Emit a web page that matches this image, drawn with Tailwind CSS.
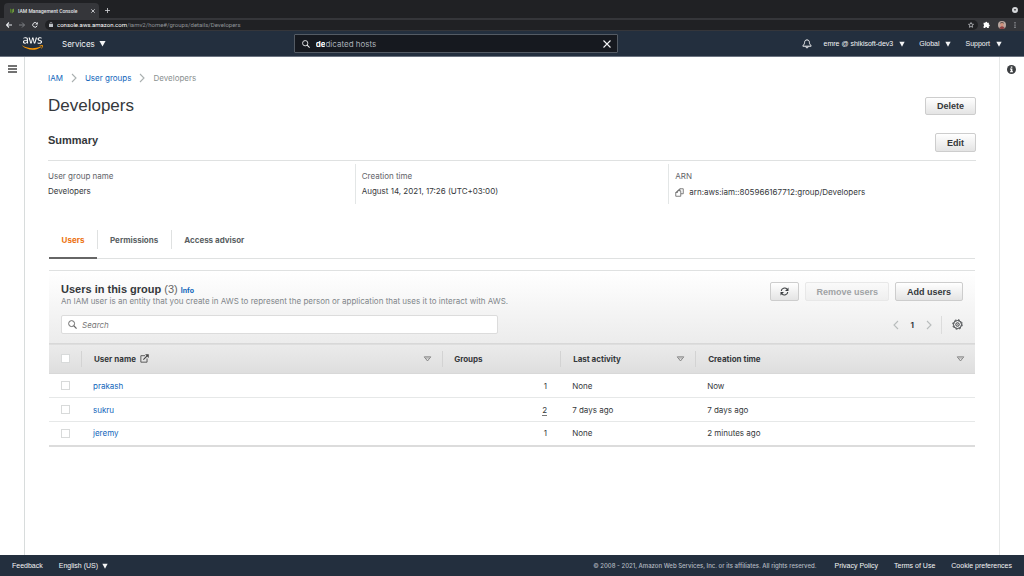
<!DOCTYPE html>
<html lang="en">
<head>
<meta charset="utf-8">
<title>IAM Management Console</title>
<script src="https://cdn.jsdelivr.net/npm/@tailwindcss/browser@4"></script>
</head>
<body class="flex min-h-screen flex-col bg-white font-[Inter,'Liberation_Sans',sans-serif] text-[8px] leading-3 text-[#35383b]">
<svg class="hidden" aria-hidden="true">
  <symbol id="caret" viewBox="0 0 8 8"><path d="M0.5 1h7L4 7.5z" fill="currentColor"/></symbol>
  <symbol id="sort" viewBox="0 0 10 7"><path d="M1.2 1h7.6L5 5.8z" fill="none" stroke="currentColor" stroke-width="1"/><path d="M3.3 2.4h3.4" stroke="currentColor" stroke-width=".6"/></symbol>
  <symbol id="glass" viewBox="0 0 10 10"><circle cx="4" cy="4" r="3.300" fill="none" stroke="currentColor" stroke-width="1.1"/><path d="M6.4 6.4L9.500 9.500" stroke="currentColor" stroke-width="1.3"/></symbol>
  <symbol id="chev" viewBox="0 0 6 10"><path d="M1 1l4 4-4 4" fill="none" stroke="currentColor" stroke-width="1.1"/></symbol>
</svg>

<!-- Browser tab strip -->
<div class="flex h-[18px] items-end bg-[#202124] pl-1">
  <div class="flex h-[15px] w-[95px] items-center rounded-t bg-[#35363a] pr-1 pl-[5px] text-[5px] text-[#e3e5e8]">
    <svg class="mr-[3px] size-[6px]" viewBox="0 0 6 6"><path d="M1 0.5l1.6 1v4L1 4.2z" fill="#4f7a2c"/><path d="M5 0.5l-1.8 1v4L5 3.5z" fill="#6f9a3a"/></svg>
    <span class="flex-1 font-[Roboto,sans-serif] font-medium whitespace-nowrap">IAM Management Console</span>
    <button aria-label="Close tab"><svg class="size-[4px]" viewBox="0 0 4 4"><path d="M.3.3l3.4 3.4M3.7.3L.3 3.7" stroke="#e3e5e8" stroke-width=".8"/></svg></button>
  </div>
  <button class="mb-[5px] ml-[6px]" aria-label="New tab"><svg class="size-[5px]" viewBox="0 0 5 5"><path d="M2.5 0v5M0 2.5h5" stroke="#d5d7da" stroke-width=".8"/></svg></button>
  <svg class="mr-[6px] mb-[5px] ml-auto size-[6px]" viewBox="0 0 6 6"><circle cx="3" cy="3" r="3" fill="#d5d7da"/><path d="M1.8 2.3h2.4L3 4z" fill="#202124"/></svg>
</div>

<!-- Browser toolbar -->
<div class="flex h-[13px] items-center bg-[#35363a] px-[6px] text-[#e8eaed]">
  <button aria-label="Back"><svg class="size-[6px]" viewBox="0 0 6 6"><path d="M6 3H.6M3 .5L.5 3 3 5.5" fill="none" stroke="currentColor" stroke-width="1.100"/></svg></button>
  <button class="ml-[7px] text-[#7e8084]" aria-label="Forward"><svg class="size-[6px]" viewBox="0 0 6 6"><path d="M0 3h5.4M3 .5L5.5 3 3 5.5" fill="none" stroke="currentColor" stroke-width="1"/></svg></button>
  <button class="ml-[7px]" aria-label="Reload"><svg class="size-[6px]" viewBox="0 0 6 6"><path d="M4.9 1.5A2.3 2.3 0 1 0 5.2 3.7" fill="none" stroke="currentColor" stroke-width="1"/><path d="M5.8 0v2.6H3.2z" fill="currentColor"/></svg></button>
  <label class="ml-[7px] flex h-[10px] flex-1 items-center rounded-full bg-[#202124] pr-1 pl-[4px] font-[Roboto,sans-serif] text-[6px] leading-[10px]">
    <svg class="mr-[4px] h-[5px] w-[4px]" viewBox="0 0 4 5"><path d="M0 2h4v3H0z" fill="#bdc1c6"/><path d="M1 2V1.3a1 1 0 0 1 2 0V2" fill="none" stroke="#bdc1c6" stroke-width=".6"/></svg>
    <input class="field-sizing-content bg-transparent text-white outline-none" aria-label="Address" value="console.aws.amazon.com"><span class="text-[#8f9398]">/iamv2/home#/groups/details/Developers</span>
    <svg class="ml-auto size-[6px]" viewBox="0 0 12 12"><path d="M6 1l1.5 3.3 3.5.4-2.6 2.4.7 3.5L6 8.8l-3.1 1.8.7-3.5L1 4.7l3.5-.4z" fill="none" stroke="#dfe1e5" stroke-width="1.3"/></svg>
  </label>
  <svg class="ml-[5px] size-[7px]" viewBox="0 0 12 12"><path d="M1 3h3a1.6 1.6 0 1 1 3.2 0H10v3a1.6 1.6 0 1 1 0 3.2V12H7a1.6 1.6 0 0 0-3.2 0H1V8.8A1.6 1.6 0 0 0 1 6z" fill="#fff"/></svg>
  <svg class="ml-[8px] size-[8px]" viewBox="0 0 8 8"><circle cx="4" cy="4" r="4" fill="#b9a7a0"/><path d="M2 2.6C2 .8 6 .8 6 2.6z" fill="#4a3934"/><circle cx="4" cy="3.7" r="1.8" fill="#d0917c"/><path d="M1.3 7a3 3 0 0 1 5.4 0A4 4 0 0 1 1.3 7z" fill="#8f3f40"/></svg>
  <svg class="mr-[2px] ml-[8px] h-[6px] w-[2px]" viewBox="0 0 2 6"><circle cx="1" cy=".8" r=".6" fill="#dfe1e5"/><circle cx="1" cy="3" r=".6" fill="#dfe1e5"/><circle cx="1" cy="5.2" r=".6" fill="#dfe1e5"/></svg>
</div>

<!-- AWS navigation -->
<header class="flex h-[26px] items-center border-b border-[#6b7380] bg-[#232f3e] px-[22px] font-['Liberation_Sans',sans-serif] text-[7px] text-[#f4f5f6]">
  <a href="#" aria-label="AWS home"><svg class="h-[13px] w-[21px]" viewBox="0 0 304 182"><path fill="#fff" d="M86.4 66.4c0 3.7.4 6.7 1.1 8.9.8 2.2 1.8 4.6 3.2 7.2.5.8.7 1.6.7 2.3 0 1-.6 2-1.9 3l-6.3 4.2c-.9.6-1.8.9-2.6.9-1 0-2-.5-3-1.4-1.4-1.500-2.600-3.100-3.600-4.700-1-1.700-2-3.600-3.100-5.900-7.800 9.200-17.600 13.800-29.400 13.800-8.400 0-15.100-2.400-20-7.200-4.900-4.800-7.400-11.200-7.400-19.200 0-8.500 3-15.400 9.100-20.600 6.100-5.200 14.200-7.800 24.500-7.800 3.400 0 6.900.3 10.600.8 3.700.5 7.500 1.300 11.500 2.200v-7.300c0-7.600-1.600-12.900-4.700-16-3.200-3.100-8.600-4.600-16.300-4.600-3.500 0-7.100.4-10.800 1.300-3.700.9-7.300 2-10.800 3.400-1.600.7-2.800 1.100-3.500 1.300-.7.200-1.200.3-1.600.3-1.400 0-2.100-1-2.100-3.100v-4.900c0-1.600.2-2.800.7-3.500.5-.7 1.400-1.400 2.800-2.100 3.500-1.800 7.700-3.300 12.600-4.500C41 1.900 46.200 1.300 51.700 1.300c11.900 0 20.600 2.700 26.200 8.100 5.500 5.400 8.300 13.600 8.300 24.600v32.400zM45.800 81.600c3.300 0 6.700-.6 10.300-1.800 3.600-1.200 6.800-3.400 9.500-6.400 1.600-1.900 2.800-4 3.400-6.400.6-2.400 1-5.300 1-8.700v-4.200c-2.900-.7-6-1.300-9.200-1.700-3.200-.4-6.300-.6-9.400-.6-6.700 0-11.600 1.300-14.900 4-3.300 2.700-4.900 6.500-4.900 11.500 0 4.700 1.200 8.200 3.700 10.600 2.400 2.500 5.900 3.700 10.500 3.700zM126.100 92.400c-1.800 0-3-.3-3.800-1-.8-.6-1.500-2-2.100-3.900L96.700 10.200c-.6-2-.9-3.300-.9-4 0-1.600.8-2.500 2.400-2.500h9.800c1.900 0 3.200.3 3.900 1 .8.6 1.400 2 2 3.900l16.800 66.200 15.600-66.200c.5-2 1.100-3.300 1.900-3.900.8-.6 2.200-1 4-1h8c1.900 0 3.200.3 4 1 .8.6 1.500 2 1.900 3.900l15.800 67 17.300-67c.6-2 1.300-3.300 2-3.900.8-.6 2.100-1 3.900-1h9.300c1.600 0 2.500.8 2.500 2.500 0 .5-.1 1-.2 1.600-.1.600-.3 1.400-.7 2.500l-24.100 77.300c-.6 2-1.300 3.300-2.100 3.900-.8.6-2.100 1-3.800 1h-8.600c-1.900 0-3.200-.3-4-1-.8-.7-1.500-2-1.900-4L156 23l-15.400 64.400c-.5 2-1.100 3.300-1.900 4-.8.7-2.200 1-4 1zM254.600 95.100c-5.200 0-10.400-.6-15.400-1.800-5-1.200-8.900-2.500-11.500-4-1.600-.9-2.700-1.900-3.100-2.800-.4-.9-.6-1.900-.6-2.800v-5.100c0-2.100.8-3.100 2.300-3.100.6 0 1.200.1 1.800.3.6.2 1.500.6 2.500 1 3.400 1.500 7.100 2.700 11 3.500 4 .8 7.900 1.200 11.900 1.200 6.300 0 11.200-1.100 14.600-3.300 3.400-2.200 5.200-5.400 5.200-9.500 0-2.800-.9-5.100-2.700-7-1.800-1.900-5.200-3.600-10.100-5.200L246 52c-7.300-2.300-12.700-5.700-16-10.200-3.300-4.400-5-9.300-5-14.500 0-4.200.9-7.900 2.700-11.100 1.800-3.200 4.200-6 7.200-8.200 3-2.300 6.400-4 10.400-5.200 4-1.200 8.200-1.700 12.600-1.700 2.200 0 4.500.1 6.700.4 2.300.3 4.400.7 6.500 1.100 2 .5 3.900 1 5.700 1.600 1.800.6 3.200 1.200 4.200 1.800 1.400.8 2.400 1.600 3 2.500.6.8.9 1.900.9 3.300v4.700c0 2.100-.8 3.200-2.300 3.200-.8 0-2.100-.4-3.800-1.200-5.700-2.600-12.100-3.900-19.200-3.900-5.700 0-10.200.9-13.300 2.800-3.100 1.900-4.700 4.800-4.700 8.900 0 2.800 1 5.200 3 7.100 2 1.900 5.700 3.800 11 5.500l14.200 4.500c7.200 2.300 12.400 5.500 15.500 9.600 3.100 4.100 4.600 8.800 4.600 14 0 4.300-.9 8.200-2.600 11.600-1.800 3.400-4.200 6.400-7.300 8.800-3.100 2.500-6.800 4.300-11.100 5.600-4.500 1.400-9.200 2.100-14.300 2.100z"/><path fill="#f90" d="M273.500 143.700c-32.900 24.300-80.700 37.200-121.800 37.200-57.600 0-109.500-21.300-148.700-56.700-3.100-2.800-.3-6.600 3.400-4.400 42.400 24.600 94.700 39.500 148.800 39.500 36.500 0 76.600-7.600 113.500-23.200 5.500-2.500 10.200 3.600 4.800 7.600zM287.200 128.100c-4.200-5.400-27.800-2.600-38.500-1.300-3.200.4-3.700-2.400-.8-4.500 18.800-13.200 49.700-9.400 53.300-5 3.600 4.500-1 35.400-18.600 50.200-2.700 2.300-5.300 1.100-4.100-1.900 4-9.900 12.900-32.200 8.700-37.500z"/></svg></a>
  <button class="ml-[19px] flex items-center gap-1 font-[Inter,sans-serif] text-[8px]">Services <svg class="size-[7px]"><use href="#caret"/></svg></button>
  <div class="flex flex-1 justify-center pl-[3px]">
    <label class="flex h-[19px] w-[44%] min-w-[324px] items-center rounded-[1px] border border-[#545b64] bg-[#16191f] px-[6px] font-[Inter,sans-serif] text-[8px] leading-4">
      <svg class="mr-[6px] ml-px size-[8px]"><use href="#glass"/></svg>
      <input class="field-sizing-content bg-transparent font-bold text-white outline-none" aria-label="Search services" value="de"><span class="text-[#a9b0b8]">dicated hosts</span>
      <button class="ml-auto" aria-label="Clear search"><svg class="size-[8px]" viewBox="0 0 8 8"><path d="M.5.5l7 7M7.500.5l-7 7" stroke="currentColor" stroke-width="1.1"/></svg></button>
    </label>
  </div>
  <button aria-label="Notifications"><svg class="size-[10px]" viewBox="0 0 10 10"><path d="M5 .9c-1.700 0-2.400 1.200-2.400 2.500C2.600 5.500.9 6 .9 7.200h8.200C9.100 6 7.400 5.500 7.400 3.400 7.400 2.100 6.700.9 5 .9zM3.800 7.500c0 1.900 2.400 1.900 2.400 0" fill="none" stroke="currentColor" stroke-width="1"/></svg></button>
  <button class="ml-[11px] flex items-center gap-[6px]">emre @ shikisoft-dev3 <svg class="size-[6px]"><use href="#caret"/></svg></button>
  <button class="ml-[14px] flex items-center gap-[6px]">Global <svg class="size-[6px]"><use href="#caret"/></svg></button>
  <button class="ml-[14px] flex items-center gap-[6px]">Support <svg class="size-[6px]"><use href="#caret"/></svg></button>
</header>

<div class="flex flex-1">
  <aside class="w-[25px] border-r border-[#d8dcdc] pt-[8px] pl-[8px]">
    <button class="block" aria-label="Open navigation"><svg class="h-[8px] w-[9px]" viewBox="0 0 9 8"><path d="M0 1h9M0 4h9M0 7h9" stroke="#444" stroke-width="1.300"/></svg></button>
  </aside>

  <main class="flex-1 px-[23px] pt-[15px]">
    <nav class="flex items-center gap-[8px]" aria-label="Breadcrumb">
      <a href="#" class="text-[#1166bb]">IAM</a>
      <svg class="h-[10px] w-[6px] text-[#aab0b0]"><use href="#chev"/></svg>
      <a href="#" class="text-[#1166bb]">User groups</a>
      <svg class="h-[10px] w-[6px] text-[#aab0b0]"><use href="#chev"/></svg>
      <span class="text-[#8a9090]">Developers</span>
    </nav>

    <div class="mt-[13px] flex items-center justify-between">
      <h1 class="pb-px font-['Liberation_Sans',sans-serif] text-[17px] leading-[17px]">Developers</h1>
      <button class="h-[18px] rounded-xs border border-[#cdcdcd] bg-linear-to-b from-white to-[#e4e4e4] px-[11px] font-['Liberation_Sans',sans-serif] text-[9px] font-bold">Delete</button>
    </div>

    <section>
      <div class="mt-[18px] flex items-center justify-between border-b border-[#dfe1e1] pb-[8px]">
        <h2 class="pb-[5px] font-['Liberation_Sans',sans-serif] text-[11px] leading-[14px] font-bold">Summary</h2>
        <button class="h-[19px] rounded-xs border border-[#cdcdcd] bg-linear-to-b from-white to-[#e4e4e4] px-[11px] font-['Liberation_Sans',sans-serif] text-[9px] font-bold">Edit</button>
      </div>
      <div class="mt-[3px] flex gap-[6px]">
        <div class="flex-1 pt-[6px]"><p class="text-[#5f6368]">User group name</p><p class="mt-[3px]">Developers</p></div>
        <div class="h-10 w-px bg-[#e3e6e6]"></div>
        <div class="flex-1 pt-[6px]"><p class="text-[#5f6368]">Creation time</p><p class="mt-[3px]">August 14, 2021, 17:26 (UTC+03:00)</p></div>
        <div class="h-10 w-px bg-[#e3e6e6]"></div>
        <div class="flex-1 pt-[6px]"><p class="text-[#5f6368]">ARN</p>
          <p class="mt-[4px] flex items-center gap-[5px]"><button aria-label="Copy ARN"><svg class="size-[9px]" viewBox="0 0 18 18"><path d="M6.500 5V4.500L9.500 1.500h7v10H12M9.500 1.500v3h-3M1.500 9L5 5.500h6.500V16.500h-10zM5 5.500V9H1.500" fill="none" stroke="#555" stroke-width="1.500"/></svg></button>arn:aws:iam::805966167712:group/Developers</p></div>
      </div>
    </section>

    <div class="mx-px mt-[19px] flex h-[36px] border-b border-[#dfe1e1] font-bold text-[#5a5f63]" role="tablist">
      <button class="-mb-px min-w-12 border-b-2 border-[#666] px-3 text-[#ec7211]" role="tab" aria-selected="true">Users</button>
      <button class="mt-[7px] mb-[9px] border-l border-[#dfe1e1] px-3" role="tab">Permissions</button>
      <button class="mt-[7px] mb-[9px] ml-px border-l border-[#dfe1e1] px-3" role="tab">Access advisor</button>
    </div>

    <section class="mx-px mt-[11px]">
      <div class="border-t border-[#dfe1e1] bg-linear-to-b from-white to-[#ececec] px-3 pt-[11px] pb-[9px]">
        <div class="flex items-start justify-between">
          <div class="pt-px">
            <h2 class="flex h-3 items-baseline gap-[3px] font-['Liberation_Sans',sans-serif] text-[11px] leading-3 font-bold">Users in this group <span class="font-normal text-[#666]">(3)</span> <a href="#" class="font-[Inter,sans-serif] text-[7px] text-[#1166bb]">Info</a></h2>
            <p class="text-[#81868a]">An IAM user is an entity that you create in AWS to represent the person or application that uses it to interact with AWS.</p>
          </div>
          <div class="flex gap-[6px] font-['Liberation_Sans',sans-serif] text-[9px] font-bold">
            <button class="flex h-[19px] w-[29px] items-center justify-center rounded-xs border border-[#cdcdcd] bg-linear-to-b from-white to-[#e4e4e4]" aria-label="Refresh"><svg class="size-[9px]" viewBox="0 0 18 18"><path d="M2.500 8A6.600 6.600 0 0 1 14 4.200M15.500 10A6.600 6.600 0 0 1 4 13.800" fill="none" stroke="#3c3f42" stroke-width="2.200"/><path d="M17 1v7h-7zM1 17v-7h7z" fill="#3c3f42"/></svg></button>
            <button class="h-[19px] rounded-xs border border-[#e8e8e8] bg-linear-to-b from-[#fafafa] to-[#efefef] px-[10px] text-[#a0a3a5]" disabled>Remove users</button>
            <button class="h-[19px] rounded-xs border border-[#cdcdcd] bg-linear-to-b from-white to-[#e4e4e4] px-[11px]">Add users</button>
          </div>
        </div>
        <div class="mt-[8px] flex items-center justify-between">
          <label class="flex h-[19px] w-[437px] items-center gap-[5px] rounded-xs border border-[#dcdcdc] bg-white px-[6px]">
            <svg class="size-[9px] text-[#666]"><use href="#glass"/></svg>
            <input class="flex-1 bg-transparent italic outline-none placeholder:text-[#777]" placeholder="Search" aria-label="Search users">
          </label>
          <div class="flex items-center">
            <button class="text-[#b8bcbc]" aria-label="Previous page"><svg class="h-[10px] w-[6px] rotate-180"><use href="#chev"/></svg></button>
            <span class="mx-[12px] font-bold">1</span>
            <button class="text-[#b8bcbc]" aria-label="Next page"><svg class="h-[10px] w-[6px]"><use href="#chev"/></svg></button>
            <span class="mr-[10px] ml-[9px] h-[18px] w-px bg-[#dcdcdc]"></span>
            <button aria-label="Preferences"><svg class="size-[11px]" viewBox="0 0 22 22" fill="none" stroke="#3c3f42"><circle cx="11" cy="11" r="8" stroke-width="2"/><circle cx="11" cy="11" r="9.500" stroke-width="2" stroke-dasharray="3.700 3.760"/><circle cx="11" cy="11" r="3.500" stroke-width="2"/><circle cx="11" cy="11" r=".8" stroke-width="1"/></svg></button>
          </div>
        </div>
      </div>

      <table class="w-full table-fixed border-b-2 border-[#dcdcdc] text-left">
        <colgroup><col class="w-[32px]"><col class="w-[39%]"><col class="w-[118px]"><col class="w-[135px]"><col></colgroup>
        <thead>
          <tr class="h-[30px] border-t border-b border-[#d8d8d8] bg-linear-to-b from-[#ebebeb] to-[#dedede]">
            <th class="pl-3"><input type="checkbox" aria-label="Select all" class="block size-[9px] appearance-none border border-[#d8dada] bg-white"></th>
            <th><div class="flex h-[16px] items-center border-l border-[#d3d3d3] pr-[10px] pl-3">User name<svg class="ml-1 size-[9px]" viewBox="0 0 16 16"><path d="M9 3H1.500v11.500H12.500V8" fill="none" stroke="#444" stroke-width="1.500"/><path d="M6 10L13 3" stroke="#444" stroke-width="2"/><path d="M9 .5h6.500V7z" fill="#444"/></svg><svg class="ml-auto h-[6px] w-[9px] text-[#777]"><use href="#sort"/></svg></div></th>
            <th><div class="flex h-[16px] items-center border-l border-[#d3d3d3] pl-[11px]">Groups</div></th>
            <th><div class="flex h-[16px] items-center border-l border-[#d3d3d3] pr-[10px] pl-3">Last activity<svg class="ml-auto h-[6px] w-[9px] text-[#777]"><use href="#sort"/></svg></div></th>
            <th><div class="flex h-[16px] items-center border-l border-[#d3d3d3] pr-[10px] pl-3">Creation time<svg class="ml-auto h-[6px] w-[9px] text-[#777]"><use href="#sort"/></svg></div></th>
          </tr>
        </thead>
        <tbody>
          <tr class="h-6 border-b border-[#e6e8e8]">
            <td class="pl-3"><input type="checkbox" aria-label="Select prakash" class="block size-[9px] appearance-none border border-[#d8dada] bg-white"></td>
            <td class="pl-3"><a href="#" class="text-[#1166bb]">prakash</a></td><td class="pr-[13px] text-right">1</td><td class="pl-3">None</td><td class="pl-3">Now</td>
          </tr>
          <tr class="h-6 border-b border-[#e6e8e8]">
            <td class="pl-3"><input type="checkbox" aria-label="Select sukru" class="block size-[9px] appearance-none border border-[#d8dada] bg-white"></td>
            <td class="pl-3"><a href="#" class="text-[#1166bb]">sukru</a></td><td class="pr-[13px] text-right"><span class="border-b border-dashed border-[#777]">2</span></td><td class="pl-3">7 days ago</td><td class="pl-3">7 days ago</td>
          </tr>
          <tr class="h-6">
            <td class="pl-3"><input type="checkbox" aria-label="Select jeremy" class="block size-[9px] appearance-none border border-[#d8dada] bg-white"></td>
            <td class="pl-3"><a href="#" class="text-[#1166bb]">jeremy</a></td><td class="pr-[13px] text-right">1</td><td class="pl-3">None</td><td class="pl-3">2 minutes ago</td>
          </tr>
        </tbody>
      </table>
    </section>
  </main>

  <aside class="w-[25px] border-l border-[#e6e8e8] pt-[8px] pl-[7px]">
    <button class="block" aria-label="Open help"><svg class="size-[9px]" viewBox="0 0 18 18"><circle cx="9" cy="9" r="9" fill="#3c3f42"/><path d="M7.500 3h3.200v2.600H7.500zM6 7.200h4.700v5.300H12v2H6v-2h1.500V9.200H6z" fill="#fff"/></svg></button>
  </aside>
</div>

<footer class="flex h-[21px] items-center bg-[#232f3e] px-3 font-['Liberation_Sans',sans-serif] text-[7px] text-[#f4f5f6]">
  <a href="#">Feedback</a>
  <button class="ml-[16px] flex items-center gap-1">English (US) <svg class="size-[6px]"><use href="#caret"/></svg></button>
  <span class="ml-auto font-[Inter,sans-serif] text-[6px] font-medium text-[#b5bbc2]">© 2008 - 2021, Amazon Web Services, Inc. or its affiliates. All rights reserved.</span>
  <a href="#" class="ml-[18px]">Privacy Policy</a>
  <a href="#" class="ml-[16px]">Terms of Use</a>
  <a href="#" class="ml-[16px]">Cookie preferences</a>
</footer>
</body>
</html>
